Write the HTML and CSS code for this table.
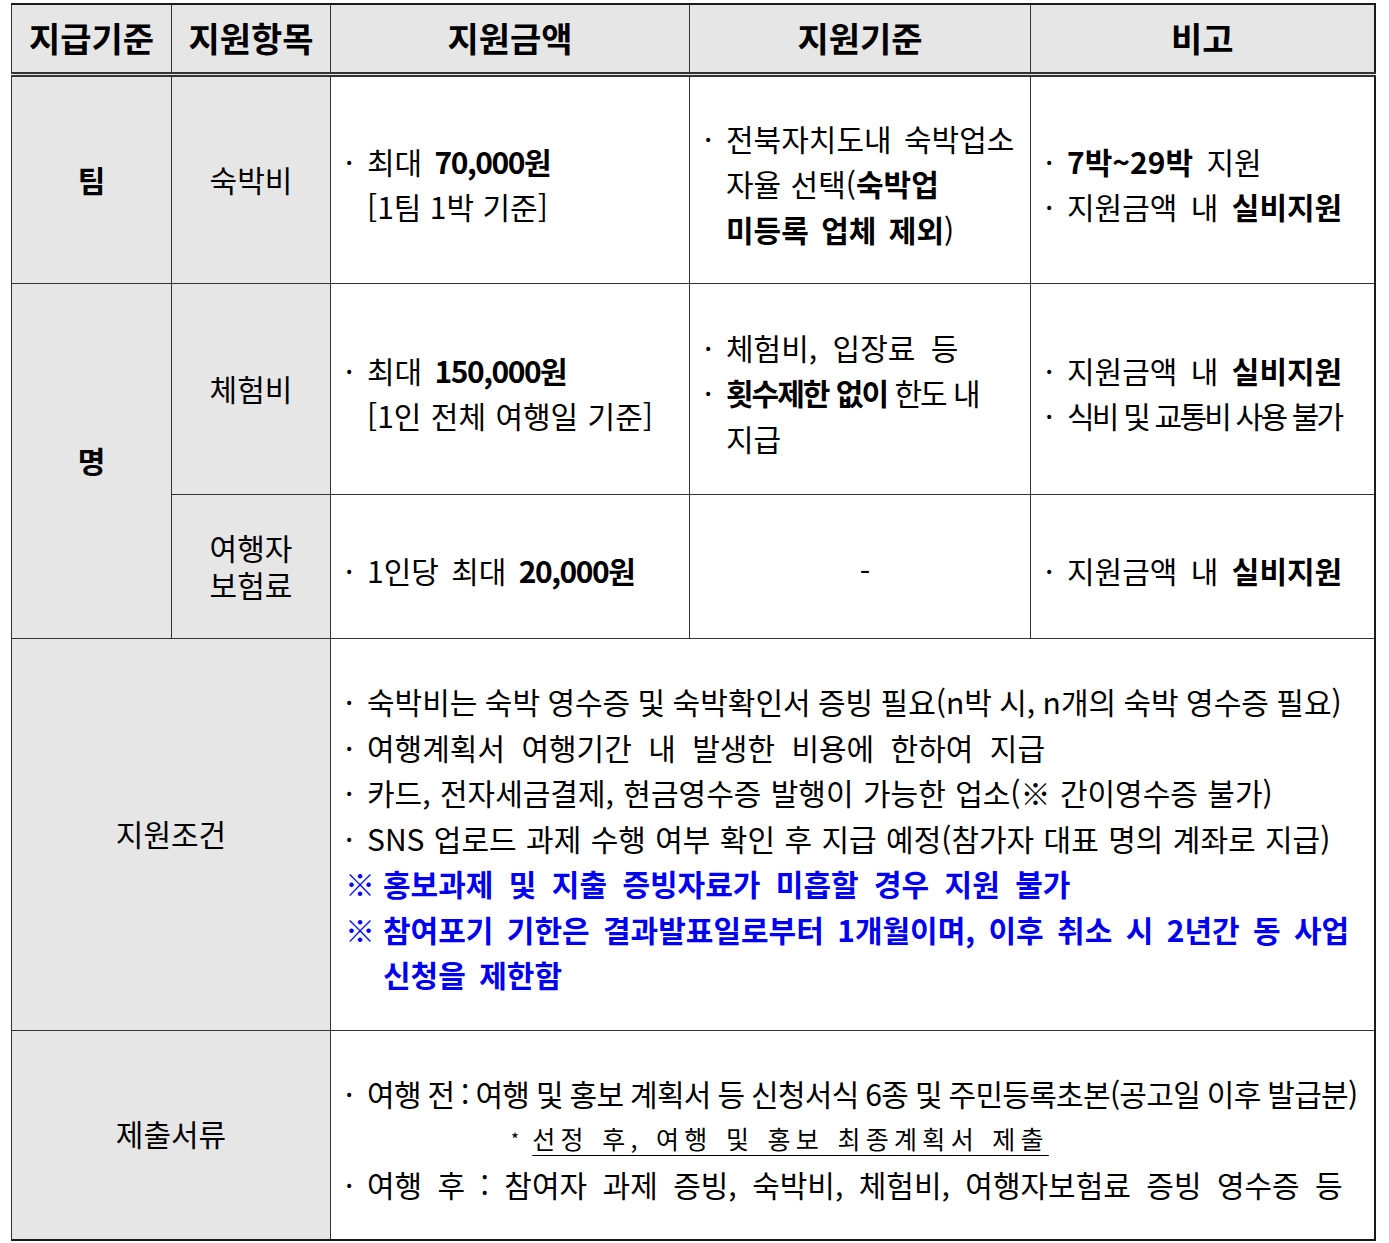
FILE: index.html
```html
<!DOCTYPE html>
<html lang="ko">
<head>
<meta charset="utf-8">
<link rel="stylesheet" href="styles.css">
</head>
<body>
<table class="grid">
  <colgroup>
    <col class="c1"><col class="c2"><col class="c3"><col class="c4"><col class="c5">
  </colgroup>
  <thead>
    <tr class="head">
      <th>지급기준</th><th>지원항목</th><th>지원금액</th><th>지원기준</th><th>비고</th>
    </tr>
  </thead>
  <tbody>
    <tr class="r1">
      <td class="label strong">팀</td>
      <td class="label">숙박비</td>
      <td class="body">
        <div class="item"><span class="dot">·</span><div class="txt"><div class="ws4">최대 <b class="num">70,000원</b></div><div class="ws0">[1팀 1박 기준]</div></div></div>
      </td>
      <td class="body">
        <div class="item"><span class="dot">·</span><div class="txt"><div class="ws4">전북자치도내 숙박업소</div><div class="ws1">자율 선택(<b>숙박업</b></div><div class="ws4"><b>미등록 업체 제외</b>)</div></div></div>
      </td>
      <td class="body">
        <div class="item"><span class="dot">·</span><div class="txt"><div class="ws5"><b>7박~29박</b> 지원</div></div></div>
        <div class="item"><span class="dot">·</span><div class="txt"><div class="ws5">지원금액 내 <b>실비지원</b></div></div></div>
      </td>
    </tr>
    <tr class="r2">
      <td class="label strong" rowspan="2">명</td>
      <td class="label">체험비</td>
      <td class="body">
        <div class="item"><span class="dot">·</span><div class="txt"><div class="ws4">최대 <b class="num">150,000원</b></div><div class="ws1">[1인 전체 여행일 기준]</div></div></div>
      </td>
      <td class="body">
        <div class="item"><span class="dot">·</span><div class="txt"><div class="ws7">체험비, 입장료 등</div></div></div>
        <div class="item"><span class="dot">·</span><div class="txt"><div class="cond1"><b>횟수제한 없이</b> 한도 내</div><div class="ws0">지급</div></div></div>
      </td>
      <td class="body">
        <div class="item"><span class="dot">·</span><div class="txt"><div class="ws5">지원금액 내 <b>실비지원</b></div></div></div>
        <div class="item"><span class="dot">·</span><div class="txt"><div class="cond2">식비 및 교통비 사용 불가</div></div></div>
      </td>
    </tr>
    <tr class="r3">
      <td class="label two">여행자<br>보험료</td>
      <td class="body">
        <div class="item"><span class="dot">·</span><div class="txt"><div class="ws4">1인당 최대 <b class="num">20,000원</b></div></div></div>
      </td>
      <td class="body center">-</td>
      <td class="body">
        <div class="item"><span class="dot">·</span><div class="txt"><div class="ws5">지원금액 내 <b>실비지원</b></div></div></div>
      </td>
    </tr>
    <tr class="r4">
      <td class="label" colspan="2">지원조건</td>
      <td class="body wide" colspan="3">
        <div class="item"><span class="dot">·</span><div class="txt"><div class="wsm1">숙박비는 숙박 영수증 및 숙박확인서 증빙 필요(n박 시, n개의 숙박 영수증 필요)</div></div></div>
        <div class="item"><span class="dot">·</span><div class="txt"><div class="ws8">여행계획서 여행기간 내 발생한 비용에 한하여 지급</div></div></div>
        <div class="item"><span class="dot">·</span><div class="txt"><div class="ws1">카드, 전자세금결제, 현금영수증 발행이 가능한 업소(※ 간이영수증 불가)</div></div></div>
        <div class="item"><span class="dot">·</span><div class="txt"><div class="ws1">SNS 업로드 과제 수행 여부 확인 후 지급 예정(참가자 대표 명의 계좌로 지급)</div></div></div>
        <div class="item note"><span class="mark">※</span><div class="txt"><div class="ws7">홍보과제 및 지출 증빙자료가 미흡할 경우 지원 불가</div></div></div>
        <div class="item note"><span class="mark">※</span><div class="txt"><div class="ws5">참여포기 기한은 결과발표일로부터 1개월이며, 이후 취소 시 2년간 동 사업</div><div class="ws5">신청을 제한함</div></div></div>
      </td>
    </tr>
    <tr class="r5">
      <td class="label" colspan="2">제출서류</td>
      <td class="body wide" colspan="3">
        <div class="item"><span class="dot">·</span><div class="txt"><div class="cond3">여행 전 : 여행 및 홍보 계획서 등 신청서식 6종 및 주민등록초본(공고일 이후 발급분)</div></div></div>
        <div class="sub"><span class="star">*</span> <span class="u">선정 후, 여행 및 홍보 최종계획서 제출</span></div>
        <div class="item"><span class="dot">·</span><div class="txt"><div class="ws7">여행 후 : 참여자 과제 증빙, 숙박비, 체험비, 여행자보험료 증빙 영수증 등</div></div></div>
      </td>
    </tr>
  </tbody>
</table>
</body>
</html>
```

FILE: styles.css
```css
html, body {
  margin: 0;
  padding: 0;
  background: #ffffff;
}

body {
  padding: 3px 0 0 11px;
  font-family: "Noto Sans CJK KR", "Noto Sans", sans-serif;
  color: #000000;
}

.grid {
  border-collapse: collapse;
  table-layout: fixed;
  width: 1363px;
  border-top: 2px solid #1a1a1a;
  border-right: 2px solid #1a1a1a;
  border-bottom: 2px solid #1a1a1a;
  border-left: 1px solid #1a1a1a;
}

.c1 { width: 160px; }
.c2 { width: 159px; }
.c3 { width: 359px; }
.c4 { width: 341px; }
.c5 { width: 344px; }

.grid th,
.grid td {
  border: 1px solid #333333;
  padding: 0;
  vertical-align: middle;
}

.grid .head th {
  background: #e6e6e6;
  height: 65px;
  font-size: 34px;
  font-weight: 700;
  text-align: center;
  border-bottom: 5px double #333333;
  line-height: 1;
  padding-bottom: 2px;
}

.grid .label {
  background: #e6e6e6;
  text-align: center;
  font-size: 30px;
  line-height: 37px;
  padding-bottom: 2px;
}

.grid .label.strong {
  font-weight: 700;
}

.r1 { height: 209px; }
.r2 { height: 211px; }
.r3 { height: 144px; }
.r4 { height: 392px; }
.r5 { height: 209px; }

.grid .body {
  background: #ffffff;
  font-size: 30px;
  line-height: 45.5px;
  padding: 8px 4px 0 14px;
}

.grid .body.center {
  text-align: center;
}

.body b {
  font-weight: 700;
}

.body b.num {
  letter-spacing: -1.5px;
}

.item {
  display: flex;
  align-items: flex-start;
}

.dot {
  flex: none;
  width: 22px;
}

.txt {
  flex: 1 1 auto;
  white-space: nowrap;
}

.wsm1 { word-spacing: -1px; }
.ws0 { word-spacing: 0; }
.ws1 { word-spacing: 1px; }
.ws4 { word-spacing: 4px; }
.ws5 { word-spacing: 5px; }
.ws7 { word-spacing: 7px; }
.ws8 { word-spacing: 8px; }

.cond1 {
  letter-spacing: -2px;
  word-spacing: 1px;
}

.cond2 {
  letter-spacing: -2.8px;
  word-spacing: 1px;
}

.cond3 {
  letter-spacing: -0.7px;
  word-spacing: -1px;
}

.note {
  color: #0000f0;
  font-weight: 700;
}

.mark {
  flex: none;
  width: 38px;
}

.sub {
  padding-left: 166px;
  font-size: 25px;
  letter-spacing: 5.3px;
  word-spacing: 1px;
}

.star {
  font-size: 17px;
  letter-spacing: 0;
  vertical-align: 3px;
}

.u {
  text-decoration: underline;
  text-underline-offset: 6px;
  text-decoration-thickness: 1px;
}
```
